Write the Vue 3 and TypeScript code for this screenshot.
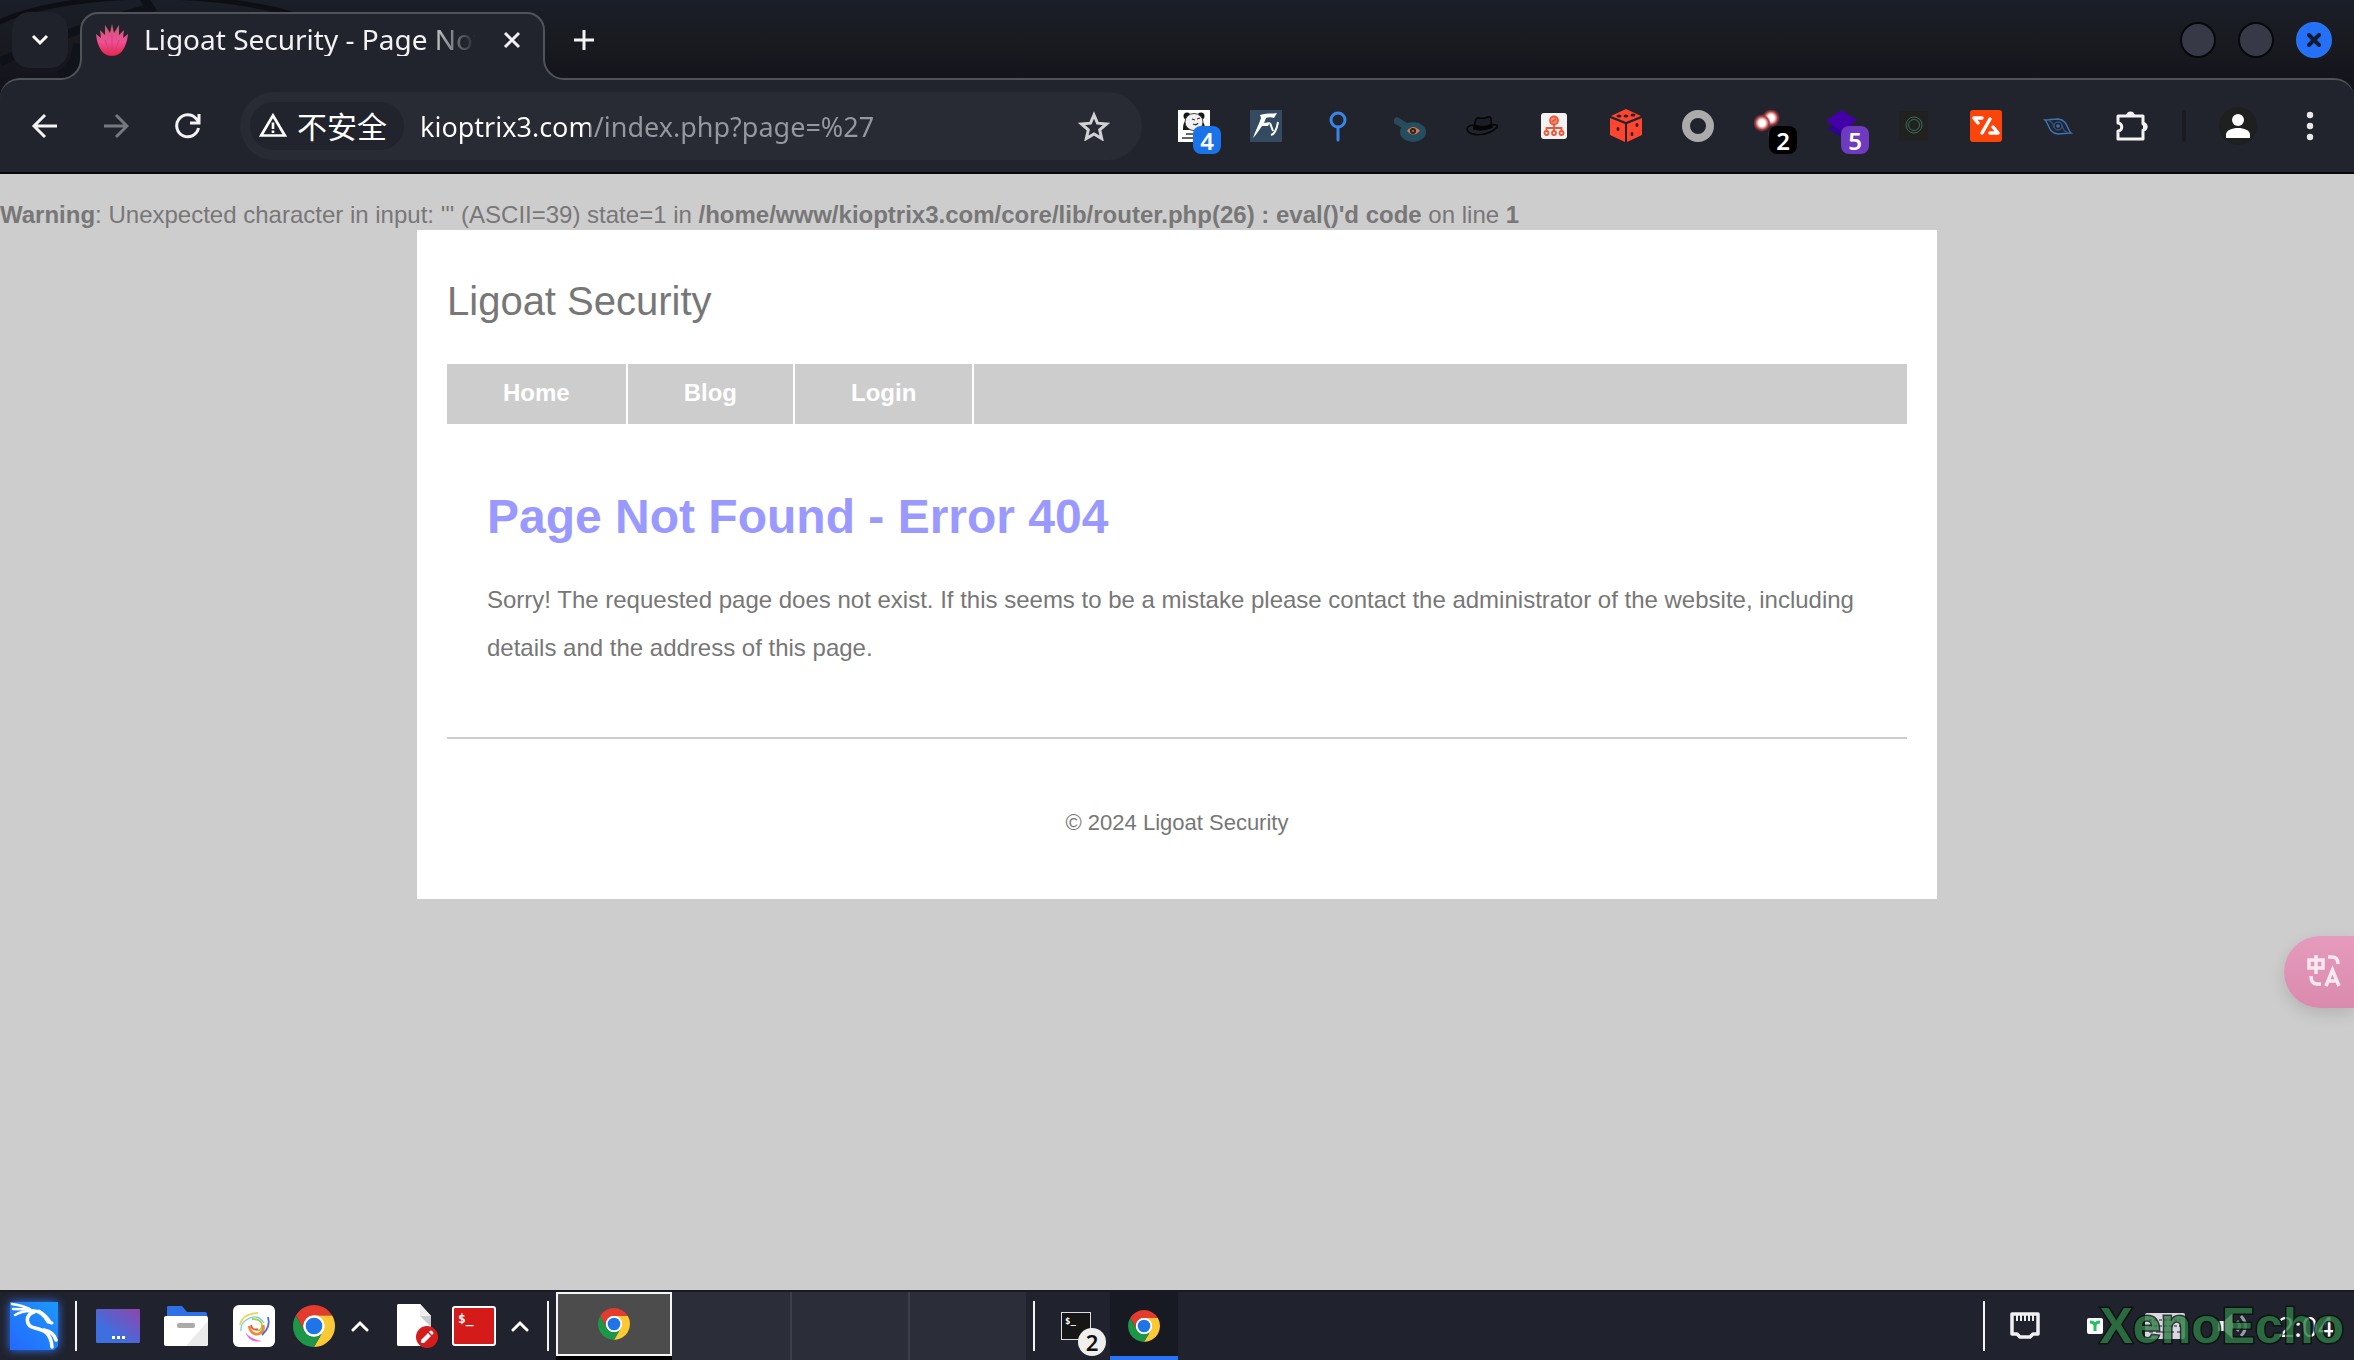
<script setup lang="ts">
import { ref } from 'vue'

interface NavItem {
  label: string
  href: string
}

const url = ref('kioptrix3.com/index.php?page=%27')
const nav: NavItem[] = [
  { label: 'Home', href: '#home' },
  { label: 'Blog', href: '#blog' },
  { label: 'Login', href: '#login' },
]
const idleWorkspaces: number[] = [2, 3, 4]
</script>

<template>
  <div class="desktop">
    <svg class="defs" width="0" height="0" aria-hidden="true">
      <symbol id="chrome" viewBox="0 0 48 48">
        <circle cx="24" cy="24" r="13" fill="#fff" />
        <path fill="#e33b2e" d="M24 12H44.78a24 24 0 0 0-41.56 0L13.6 30A12 12 0 0 1 24 12Z" />
        <path fill="#fcc934" d="M34.39 30 24 48A24 24 0 0 0 44.78 12H24A12 12 0 0 1 34.39 30Z" />
        <path fill="#1e9648" d="M13.6 30 3.22 12A24 24 0 0 0 24 48L34.39 30A12 12 0 0 1 13.6 30Z" />
        <circle cx="24" cy="24" r="12" fill="#fff" />
        <circle cx="24" cy="24" r="9.5" fill="#1f74e8" />
      </symbol>
    </svg>

    <header class="browser">
      <div class="tabstrip">
        <svg class="wallpaper" width="340" height="78" viewBox="0 0 340 78" fill="none" aria-hidden="true">
          <path d="M-5 24C60-8 200-12 292 14" stroke="#0d0f15" stroke-width="5" />
          <path d="M0 62C40 42 100 22 150 8l-6-10" stroke="#0f1118" stroke-width="9" />
          <path d="M60 78C74 70 78 60 80 44" stroke="#11131a" stroke-width="14" />
        </svg>
        <button class="tab-search" aria-label="Search tabs">
          <svg width="20" height="14" viewBox="0 0 20 14"><path d="M3 3l7 7 7-7" fill="none" stroke="#fff" stroke-width="3" /></svg>
        </button>
        <div class="tab">
          <svg class="tab-shape" width="504" height="70" viewBox="0 0 504 70" aria-hidden="true">
            <path d="M0 70V67A20 20 0 0 0 20 47V18A17 17 0 0 1 37 1H466A17 17 0 0 1 483 18V47A20 20 0 0 0 503 67V70Z" fill="#22242d" />
            <path d="M0 67A20 20 0 0 0 20 47V18A17 17 0 0 1 37 1H466A17 17 0 0 1 483 18V47A20 20 0 0 0 503 67" fill="none" stroke="#51535a" stroke-width="2" />
          </svg>
          <svg class="favicon" width="32" height="32" viewBox="0 0 32 32" aria-hidden="true">
            <defs>
              <linearGradient id="lotus" x1="0" y1="0" x2="0" y2="1">
                <stop offset="0" stop-color="#c95a72" />
                <stop offset=".55" stop-color="#ee4f96" />
                <stop offset="1" stop-color="#e92446" />
              </linearGradient>
            </defs>
            <path fill="url(#lotus)" d="M16 0l2 9 5-8 0 10 5-5-1 8 5-4c-1 10-5 22-16 22S1 20 0 10l5 4-1-8 5 5 0-10 5 8Z" />
            <path d="M16 30V11M14 29L9 16M18 29l5-13" stroke="#d0407c" stroke-width="1" fill="none" />
          </svg>
          <span class="tab-title">Ligoat Security - Page Not Found</span>
          <button class="tab-close" aria-label="Close tab">
            <svg width="18" height="18" viewBox="0 0 18 18"><path d="M2 2l14 14M16 2L2 16" stroke="#f3f3f5" stroke-width="3" /></svg>
          </button>
        </div>
        <button class="new-tab" aria-label="New tab">
          <svg width="20" height="20" viewBox="0 0 20 20"><path d="M10 0v20M0 10h20" stroke="#f3f3f5" stroke-width="3" /></svg>
        </button>
        <div class="window-buttons">
          <button class="win" aria-label="Minimise"></button>
          <button class="win" aria-label="Maximise"></button>
          <button class="win win-close" aria-label="Close window">
            <svg width="14" height="14" viewBox="0 0 14 14"><path d="M2 2l10 10M12 2L2 12" stroke="#101a30" stroke-width="4" stroke-linecap="round" /></svg>
          </button>
        </div>
      </div>

      <div class="toolbar">
        <button class="tool" aria-label="Back">
          <svg width="26" height="26" viewBox="0 0 26 26" fill="none" stroke="#f3f3f5" stroke-width="3"><path d="M26 13H4M14 2L3 13l11 11" /></svg>
        </button>
        <button class="tool" aria-label="Forward">
          <svg width="26" height="26" viewBox="0 0 26 26" fill="none" stroke="#777981" stroke-width="3"><path d="M1 13h22M13 2l11 11-11 11" /></svg>
        </button>
        <button class="tool" aria-label="Reload">
          <svg width="26" height="26" viewBox="0 0 26 26" fill="none" stroke="#f3f3f5" stroke-width="3"><path d="M23.5 15A11 11 0 1 1 21 5.500L24 9M24 1v9h-9" /></svg>
        </button>

        <div class="omnibox">
          <button class="chip">
            <svg width="28" height="24" viewBox="0 0 28 24" fill="none" stroke="#fff" aria-hidden="true">
              <path d="M14 2.500L2.200 22.500h23.600Z" stroke-width="2.700" />
              <path d="M14 9.500v6.500M14 17.500v2.500" stroke-width="2.600" />
            </svg>
            <span>不安全</span>
          </button>
          <input v-model="url" class="url" type="text" aria-label="Address" spellcheck="false" />
          <button class="star" aria-label="Bookmark this page">
            <svg width="32" height="30" viewBox="0 0 32 30"><path d="M16 4l3.500 8.200 9 .8-6.800 5.900 2 8.700-7.700-4.600-7.700 4.600 2-8.700L3.500 13l9-.8Z" fill="none" stroke="#d0d1d4" stroke-width="3" /></svg>
          </button>
        </div>

        <div class="extensions">
          <button class="tool" aria-label="Panda extension">
            <svg width="32" height="32" viewBox="0 0 32 32">
              <path fill="#fff" d="M0 0h32v32H0z" />
              <circle cx="9" cy="6" r="3.500" fill="#16181a" /><circle cx="23" cy="6" r="3.500" fill="#16181a" />
              <path fill="#16181a" d="M5 20c0-6 1-9 4-9h14c3 1 4 4 4 9Z" />
              <ellipse cx="16" cy="12" rx="9" ry="8.500" fill="#f2f2f2" stroke="#444" />
              <path d="M14 9l3 1M19 9l3-1M15 14c2 1 4 1 5-1" stroke="#333" stroke-width="1.300" fill="none" />
              <path d="M8 24h10M4 28h20" stroke="#333" stroke-width="1.500" />
            </svg>
            <span class="badge blue">4</span>
          </button>
          <button class="tool" aria-label="Fy extension">
            <svg width="32" height="32" viewBox="0 0 32 32">
              <path fill="#344a60" d="M0 0h32v32H0z" />
              <path fill="#fff" d="M10 5c6-2 12-1 17-2l-3 5c-3-1-6-1-8 0l-2 5 6-1-2 4-6 0C9 20 7 24 3 28c2-7 6-13 8-20Z" />
              <path d="M20 13l3 8M28 12c-1 6-3 12-7 13" stroke="#fff" stroke-width="2" fill="none" />
            </svg>
          </button>
          <button class="tool" aria-label="Pin extension">
            <svg width="20" height="32" viewBox="0 0 20 32" fill="none" stroke="#3986ea" stroke-width="3" stroke-linecap="round"><circle cx="10" cy="10" r="7" /><path d="M10 17v13" /></svg>
          </button>
          <button class="tool" aria-label="Scope extension">
            <svg width="32" height="32" viewBox="0 0 32 32">
              <path d="M3 11l10 6" stroke="#2a4a5a" stroke-width="7" stroke-linecap="round" />
              <ellipse cx="19" cy="22" rx="13" ry="10" fill="#244d60" />
              <path d="M13 21q6-8 13 0-7 7-13 0Z" fill="#d37a48" />
              <circle cx="19" cy="21" r="3" fill="#222" /><circle cx="19" cy="21" r="1" fill="#d37a48" />
            </svg>
          </button>
          <button class="tool" aria-label="Hat extension">
            <svg width="32" height="32" viewBox="0 0 32 32">
              <path d="M8 16l2-7q1-2 4-1 4 1 8-1 3-1 3 2l1 8q-8 4-18 2Z" fill="#1c1e25" stroke="#050506" stroke-width="1.500" />
              <path d="M8 14q9 4 17 0v4q-8 4-18 1Z" fill="#050506" />
              <path d="M7 15q-6 1-6 4c1 8 22 8 31-3q-2-2-6-1" fill="none" stroke="#050506" stroke-width="1.500" />
            </svg>
          </button>
          <button class="tool" aria-label="Site map extension">
            <svg width="26" height="26" viewBox="0 0 26 26" fill="none" stroke="#ee5636" stroke-width="1.800">
              <rect width="26" height="26" rx="3" fill="#f3f2f2" stroke="none" />
              <circle cx="13" cy="7.500" r="4" fill="#f0907a" /><path d="M11 9l4-3M13 12v7M5.500 18v-3h15v3" />
              <circle cx="5.500" cy="20" r="2" /><circle cx="13" cy="20" r="2" /><circle cx="20.500" cy="20" r="2" />
            </svg>
          </button>
          <button class="tool" aria-label="Dice extension">
            <svg width="32" height="34" viewBox="0 0 32 34">
              <path fill="#fd4530" d="M16 0l15 7-15 6L1 7ZM0 9l15 6v18L0 26ZM32 9l-15 6v18l15-7Z" />
              <g fill="#3a1c20"><ellipse cx="9" cy="7" rx="2.500" ry="1.500" /><ellipse cx="16" cy="7" rx="2.500" ry="1.500" /><ellipse cx="23" cy="6" rx="2.500" ry="1.500" /><ellipse cx="8" cy="20" rx="1.500" ry="2" /><ellipse cx="22" cy="25" rx="1.500" ry="2" /><ellipse cx="27" cy="16" rx="1.500" ry="2" /></g>
            </svg>
          </button>
          <button class="tool" aria-label="Ring extension">
            <svg width="32" height="32" viewBox="0 0 32 32"><circle cx="16" cy="16" r="12" fill="none" stroke="#aaabaa" stroke-width="8" /></svg>
          </button>
          <button class="tool" aria-label="Link extension">
            <svg width="32" height="32" viewBox="0 0 32 32">
              <defs><radialGradient id="glow"><stop offset=".35" stop-color="#fff" /><stop offset=".55" stop-color="#e89a9a" /><stop offset=".75" stop-color="#a33a40" /><stop offset="1" stop-color="#a33a40" stop-opacity="0" /></radialGradient></defs>
              <circle cx="17" cy="8" r="9" fill="url(#glow)" /><circle cx="8" cy="13" r="9" fill="url(#glow)" /><circle cx="19" cy="24" r="5" fill="#5a2d33" />
            </svg>
            <span class="badge black">2</span>
          </button>
          <button class="tool" aria-label="Layers extension">
            <svg width="32" height="32" viewBox="0 0 32 32"><path d="M1 19l10-6 18 12-7 6Z" fill="#2c0789" /><path d="M15 0l16 10-14 12L0 11Z" fill="#4400a8" /></svg>
            <span class="badge purple">5</span>
          </button>
          <button class="tool" aria-label="Circle extension">
            <svg width="32" height="32" viewBox="0 0 32 32" fill="none"><path fill="#21221f" d="M1 1h29v30H1z" /><circle cx="16" cy="15" r="8" stroke="#366e5f" /><circle cx="16" cy="15" r="5.500" stroke="#366e5f" /></svg>
          </button>
          <button class="tool" aria-label="Code extension">
            <svg width="32" height="32" viewBox="0 0 32 32" fill="none" stroke="#fff" stroke-width="3.500" stroke-linecap="round" stroke-linejoin="round"><rect width="32" height="32" rx="3" fill="#fa4409" stroke="none" /><path d="M12 8H4l4 5M20 9l-8 14M23 17l5 6h-8" /></svg>
          </button>
          <button class="tool" aria-label="Eye extension">
            <svg width="32" height="32" viewBox="0 0 32 32" fill="none" stroke="#3a74b0" stroke-width="1.500"><path d="M3 10c4 3 3 13 13 14 5 0 7-1 13-1-4-3-3-13-13-14-5 0-8 1-13 1Z" /><path d="M5 10q6 1 7 8M27 23q-6-1-7-8" stroke="#2c5280" /><circle cx="16" cy="16" r="4" stroke="#2c5280" /><circle cx="16" cy="16" r="1" /></svg>
          </button>
          <button class="tool" aria-label="Extensions">
            <svg width="36" height="36" viewBox="-4 0 36 36"><path d="M4 8h23v8a3 3 0 0 1 0 6v9H2v-8c5 0 5-8 0-8V8Z" fill="none" stroke="#f3f3f5" stroke-width="3" stroke-linejoin="round" /><path d="M10 8a4.500 4.500 0 0 1 9 0ZM27 14a4.500 4.500 0 0 1 0 9Z" fill="#f3f3f5" /></svg>
          </button>
        </div>
        <span class="divider"></span>
        <button class="tool" aria-label="Profile">
          <svg width="38" height="38" viewBox="0 0 38 38"><circle cx="19" cy="19" r="19" fill="#1e1f1f" /><circle cx="19" cy="13" r="6" fill="#fff" /><path d="M7 31v-3c0-5 6-7 12-7s12 2 12 7v3Z" fill="#fff" /></svg>
        </button>
        <button class="tool" aria-label="Menu">
          <svg width="8" height="30" viewBox="0 0 8 30" fill="#e9e9eb"><circle cx="4" cy="4" r="3.200" /><circle cx="4" cy="15" r="3.200" /><circle cx="4" cy="26" r="3.200" /></svg>
        </button>
      </div>
    </header>

    <main class="page">
      <p class="warning"><b>Warning</b>: Unexpected character in input: ''' (ASCII=39) state=1 in <b>/home/www/kioptrix3.com/core/lib/router.php(26) : eval()'d code</b> on line <b>1</b></p>
      <div class="site">
        <div class="site-title">Ligoat Security</div>
        <nav class="nav">
          <a v-for="item in nav" :key="item.label" :href="item.href">{{ item.label }}</a>
        </nav>
        <article class="article">
          <h1>Page Not Found - Error 404</h1>
          <p>Sorry! The requested page does not exist. If this seems to be a mistake please contact the administrator of the website, including details and the address of this page.</p>
        </article>
        <footer class="footer">© 2024 Ligoat Security</footer>
      </div>
      <button class="translate" aria-label="Translate">
        <svg width="36" height="34" viewBox="0 0 36 34" fill="none" stroke="#f8e8f0" stroke-width="3.500">
          <path d="M2 6h14v8H2ZM9 1v19" /><path d="M21 3h4q6 0 6 7M4 22q0 8 6 8h4" /><path d="M19 32l6.500-16L32 32M21 27h9" />
        </svg>
      </button>
    </main>

    <footer class="taskbar">
      <button class="task w68" aria-label="Applications">
        <svg class="kali" width="48" height="48" viewBox="0 0 48 48" fill="none" stroke="#fff" stroke-linecap="round">
          <defs><linearGradient id="kali" x1="0" y1="1" x2="1" y2="0"><stop offset="0" stop-color="#2468ff" /><stop offset="1" stop-color="#1c98fb" /></linearGradient></defs>
          <path d="M0 0h48v44l-4 4H0Z" fill="url(#kali)" stroke="none" />
          <path d="M2 2c6 1 12 2 18 5M3 7c6 0 11 0 17 1M5 13c5-3 10-4 15-4" stroke-width="2.500" />
          <path d="M19 9c9-2 15 4 19 11l4 1M29 9q7 4 12 12" stroke-width="3" />
          <path d="M24 10c-9 3-9 14 1 16 8 2 16 4 17 19M34 28q10 2 12 10" stroke-width="3.500" />
        </svg>
      </button>
      <span class="sep first"></span>
      <button class="task w68" aria-label="Show desktop">
        <svg width="44" height="34" viewBox="0 0 44 34"><defs><linearGradient id="desk" x1="0" y1="1" x2="1" y2="0"><stop offset=".3" stop-color="#3e6fe0" /><stop offset="1" stop-color="#9045ab" /></linearGradient></defs><rect width="44" height="34" rx="1" fill="url(#desk)" /><path d="M16 27h3v3h-3zM21 27h3v3h-3zM26 27h3v3h-3z" fill="#fff" /></svg>
      </button>
      <button class="task w68" aria-label="Files">
        <svg width="44" height="40" viewBox="0 0 44 40"><path d="M3 12V1q0-1 2-1h13l5 6h18q2 0 2 2v6H3Z" fill="#2f70e6" /><rect y="10" width="44" height="30" rx="2" fill="#fff" /><path d="M44 15v23q0 2-2 2H22Z" fill="#ecebeb" /><rect x="13" y="17" width="18" height="5" rx="2" fill="#aaa" /></svg>
      </button>
      <button class="task w68" aria-label="Colours">
        <svg width="42" height="42" viewBox="0 0 42 42" fill="none" stroke-width="1.800"><rect width="42" height="42" rx="6" fill="#fff" /><path d="M7 20q2-11 18-12" stroke="#e9d84e" /><path d="M12 16q12-9 19 2M8 26q-1-8 7-12" stroke="#78cfe9" stroke-width="1.300" /><path d="M19 14q10 0 10 7-1 6-6 4" stroke="#a9cf45" /><path d="M16 21q2 9 9 8 7-2 5-9" stroke="#f08b38" stroke-width="2.800" /><path d="M25 24q-6 2-7-4" stroke="#ec5743" /><path d="M35 12q3 10-6 18" stroke="#5068dc" /><path d="M12 27q5 12 17 9-10-1-17-9Z" fill="#e669e5" stroke="none" /></svg>
      </button>
      <button class="task w52" aria-label="Chrome"><svg width="42" height="42"><use href="#chrome" /></svg></button>
      <button class="task w40" aria-label="More browsers"><svg width="18" height="12" viewBox="0 0 18 12"><path d="M2 10l7-7 7 7" fill="none" stroke="#fff" stroke-width="3" stroke-linecap="round" /></svg></button>
      <button class="task w64" aria-label="Text editor">
        <svg width="52" height="44" viewBox="-10 0 52 44"><path d="M2 0h22l11 12v30H2Q1 42 1 40V1Z" fill="#fff" /><path d="M24 0l11 12v11L24 12Z" fill="#c9cccf" /><path d="M24 0l11 12H24Z" fill="#eee" /><circle cx="31" cy="33" r="11" fill="#d51d1d" /><path d="M25 39v-3l7-7 3 3-7 7ZM33 28l1-1q1-1 2 0l1 1q1 1 0 2l-1 1Z" fill="#fff" /></svg>
      </button>
      <button class="task w60" aria-label="Terminal"><span class="term red">$_</span></button>
      <button class="task w32" aria-label="More terminals"><svg width="18" height="12" viewBox="0 0 18 12"><path d="M2 10l7-7 7 7" fill="none" stroke="#fff" stroke-width="3" stroke-linecap="round" /></svg></button>
      <span class="sep second"></span>
      <button class="workspace active" aria-label="Workspace 1"><svg width="32" height="32"><use href="#chrome" /></svg></button>
      <button v-for="n in idleWorkspaces" :key="n" class="workspace" :aria-label="`Workspace ${n}`"></button>
      <span class="sep third"></span>
      <button class="task w68" aria-label="Terminal windows"><span class="term black">$_</span><span class="count">2</span></button>
      <button class="task w68 running" aria-label="Chrome window"><svg width="32" height="32"><use href="#chrome" /></svg></button>

      <div class="tray">
        <span class="sep fourth"></span>
        <button class="task w70" aria-label="Network">
          <svg width="32" height="28" viewBox="0 0 32 28"><path d="M3 2h26v20h-5l-3 3H11l-3-3H3Z" fill="none" stroke="#efefef" stroke-width="3.500" stroke-linejoin="round" /><path d="M8 3v6M12 3v6M16 3v6M20 3v6M24 3v6" stroke="#efefef" stroke-width="2" /></svg>
        </button>
        <button class="task w70" aria-label="Proxy">
          <svg width="16" height="16" viewBox="0 0 16 16"><rect width="16" height="16" rx="2" fill="#fff" /><path d="M3 4q5 0 5 4 0-4 5-4M8 7v6" fill="none" stroke="#25bf64" stroke-width="3" /></svg>
        </button>
        <button class="task w70" aria-label="Keyboard">
          <svg width="40" height="26" viewBox="0 0 40 26"><rect width="40" height="26" rx="2" fill="#d9d7e0" /><path d="M4 7h32M4 13h32" stroke="#777988" stroke-width="2" stroke-dasharray="3 2" /><path d="M4 19h4M11 19h18M32 19h4" stroke="#777988" stroke-width="2" /></svg>
        </button>
        <button class="task w70" aria-label="Volume">
          <svg width="36" height="28" viewBox="0 0 36 28"><path d="M1 9h6l9-8v26l-9-8H1Z" fill="#f2f2f2" /><path d="M20 9q5 5 0 10M24 4q9 10 0 20" fill="none" stroke="#999ba5" stroke-width="3" /></svg>
        </button>
        <time class="clock">2:04</time>
      </div>
      <span class="watermark">XenoEcho</span>
    </footer>
  </div>
</template>

<style>
body {
  margin: 0;
}
</style>

<style scoped>
.desktop {
  display: flex;
  flex-direction: column;
  min-height: 100vh;
  overflow: hidden;
  background: #cdcdcd;
  font-family: "Noto Sans", "Noto Sans CJK SC", sans-serif;
}
.defs {
  position: absolute;
}
button {
  display: flex;
  align-items: center;
  justify-content: center;
  flex: none;
  padding: 0;
  border: 0;
  background: none;
  font-family: inherit;
  position: relative;
}
svg {
  display: block;
  flex: none;
}
.browser {
  background: #14151c;
}
.tabstrip {
  position: relative;
  display: flex;
  height: 78px;
  background: linear-gradient(#1a1e28, #191a1f 60%, #14151d);
}
.wallpaper {
  position: absolute;
  left: 0;
  top: 0;
}
.tab-search {
  width: 56px;
  height: 56px;
  margin: 12px 13px 0 12px;
  border-radius: 18px;
  background: #20222b;
}
.tab {
  position: relative;
  z-index: 1;
  display: flex;
  align-items: center;
  width: 463px;
  height: 56px;
  margin-top: 12px;
}
.tab-shape {
  position: absolute;
  left: -20px;
  top: 0;
}
.favicon {
  position: relative;
  margin-left: 15px;
}
.tab-title {
  position: relative;
  width: 332px;
  height: 32px;
  margin-left: 16px;
  overflow: hidden;
  white-space: nowrap;
  color: #f3f3f5;
  font-size: 28px;
  line-height: 31px;
  mask-image: linear-gradient(to right, #000 280px, transparent 332px);
}
.tab-close {
  width: 40px;
  height: 40px;
  margin-left: 16px;
}
.new-tab {
  width: 56px;
  height: 56px;
  margin: 12px 0 0 12px;
}
.window-buttons {
  display: flex;
  align-items: center;
  gap: 22px;
  margin-left: auto;
  padding: 2px 22px 0 0;
}
.win {
  box-sizing: border-box;
  width: 36px;
  height: 36px;
  border: 2px solid #07080b;
  border-radius: 50%;
  background: #373a46;
}
.win-close {
  border-color: #2874f5;
  background: #2471f7;
}
.toolbar {
  display: flex;
  align-items: center;
  height: 92px;
  padding: 0 8px;
  border-top: 2px solid #51535a;
  border-bottom: 2px solid #07080c;
  border-radius: 20px 20px 0 0;
  background: #22242d;
}
.tool {
  width: 72px;
  height: 72px;
}
.omnibox {
  display: flex;
  flex: 1;
  align-items: center;
  min-width: 0;
  height: 68px;
  margin: 0 16px;
  border-radius: 34px;
  background: #282a34;
}
.chip {
  box-sizing: border-box;
  width: 154px;
  height: 48px;
  margin-left: 10px;
  padding: 0 8px 2px 0;
  gap: 10px;
  border-radius: 24px;
  background: #22242d;
  color: #fff;
  font-family: "Noto Sans CJK SC", sans-serif;
  font-size: 30px;
  line-height: 40px;
}
.url {
  flex: 1;
  min-width: 0;
  height: 48px;
  margin-left: 16px;
  padding: 0;
  border: 0;
  outline: 0;
  background: linear-gradient(to right, #fff 170px, #9698a0 170px);
  -webkit-background-clip: text;
  background-clip: text;
  -webkit-text-fill-color: transparent;
  color: #fff;
  font-family: inherit;
  font-size: 27px;
}
.star {
  width: 64px;
  height: 64px;
  margin-right: 16px;
}
.extensions {
  display: flex;
}
.badge {
  position: absolute;
  left: 35px;
  top: 36px;
  width: 28px;
  height: 28px;
  border-radius: 8px;
  color: #fff;
  font-size: 24px;
  font-weight: 600;
  line-height: 30px;
  text-align: center;
}
.badge.blue {
  background: #1a73e8;
}
.badge.black {
  background: #000;
}
.badge.purple {
  background: #6e3abf;
}
.divider {
  width: 4px;
  height: 32px;
  margin: 0 16px;
  border-radius: 2px;
  background: #1a1b22;
}

.page {
  position: relative;
  flex: 1;
  padding-top: 28px;
  color: #777;
  font-family: "Liberation Sans", Arial, sans-serif;
  font-size: 24px;
}
.warning {
  margin: 0;
  padding-bottom: 2px;
  line-height: 26px;
}
.site {
  box-sizing: border-box;
  max-width: 1520px;
  margin: 0 auto;
  padding: 48px 30px 62px;
  background: #fff;
}
.site-title {
  font-size: 40px;
  line-height: 46px;
}
.nav {
  display: flex;
  margin-top: 40px;
  background: #cdcdcd;
}
.nav a {
  padding: 0 56px 2px;
  border-right: 2px solid #fff;
  color: #fff;
  font-weight: bold;
  line-height: 58px;
  text-decoration: none;
}
.article {
  padding: 64px 40px 65px;
  border-bottom: 2px solid #cdcdcd;
}
.article h1 {
  margin: 0 0 30px;
  color: #99f;
  font-size: 48px;
  line-height: 58px;
}
.article p {
  margin: 0;
  line-height: 48px;
}
.footer {
  margin-top: 70px;
  font-size: 22px;
  line-height: 28px;
  text-align: center;
}
.translate {
  position: absolute;
  right: 0;
  top: 762px;
  width: 70px;
  height: 72px;
  padding: 0 0 2px 12px;
  border-radius: 36px 0 0 36px;
  background: linear-gradient(#e59bbd, #da8aad);
  box-shadow: 0 6px 16px rgba(0, 0, 0, 0.12);
}

.taskbar {
  position: relative;
  display: flex;
  align-items: center;
  box-sizing: border-box;
  height: 70px;
  border-top: 2px solid #181b21;
  background: #20222d;
}
.task {
  height: 68px;
}
.w32 { width: 32px; }
.w40 { width: 40px; }
.w52 { width: 52px; }
.w60 { width: 60px; }
.w64 { width: 64px; }
.w68 { width: 68px; }
.w70 { width: 70px; }
.kali {
  filter: drop-shadow(0 0 5px #2f7bff);
}
.sep {
  flex: none;
  width: 2px;
  height: 50px;
  background: #f3f3f5;
}
.first { margin: 0 7px; }
.second { margin: 0 7px 0 11px; }
.third { margin: 0 7px; }
.fourth { margin-right: 5px; }
.term {
  box-sizing: border-box;
  text-align: left;
  color: #fff;
  font-family: "DejaVu Sans Mono", monospace;
  font-weight: bold;
}
.term.red {
  width: 44px;
  height: 40px;
  padding: 4px;
  border: 2px solid #fff;
  border-radius: 3px;
  background: #d51a1a;
  font-size: 13px;
  line-height: 14px;
}
.term.black {
  width: 30px;
  height: 28px;
  padding: 3px;
  border: 1px solid #ddd;
  background: #161616;
  font-size: 9px;
  line-height: 10px;
}
.count {
  position: absolute;
  left: 36px;
  top: 36px;
  width: 28px;
  height: 28px;
  border-radius: 50%;
  background: #efefed;
  color: #111;
  font-size: 22px;
  font-weight: 600;
  line-height: 28px;
  text-align: center;
}
.workspace {
  box-sizing: border-box;
  width: 118px;
  height: 68px;
  border-left: 2px solid #3c3f4a;
  background: #2b2d38;
}
.workspace.active {
  align-self: flex-start;
  width: 116px;
  height: 64px;
  border: 2px solid #f5f5f5;
  background: #4c4c4c;
  box-shadow: 0 4px 0 #000;
}
.workspace.active + .workspace {
  border-left-color: #2b2d38;
}
.running {
  background: #171a23;
  box-shadow: inset 0 -4px 0 #2874f5;
}
.tray {
  display: flex;
  align-items: center;
  margin-left: auto;
  padding-right: 12px;
}
.clock {
  width: 72px;
  color: #fff;
  font-size: 28px;
  line-height: 40px;
  text-align: center;
}
.watermark {
  position: absolute;
  right: 10px;
  top: 6px;
  color: #2e7c46;
  font-family: "Liberation Sans", Arial, sans-serif;
  font-size: 50px;
  font-weight: bold;
  line-height: 56px;
  opacity: 0.8;
  -webkit-text-stroke: 3px #07120b;
  paint-order: stroke fill;
  pointer-events: none;
}
</style>
